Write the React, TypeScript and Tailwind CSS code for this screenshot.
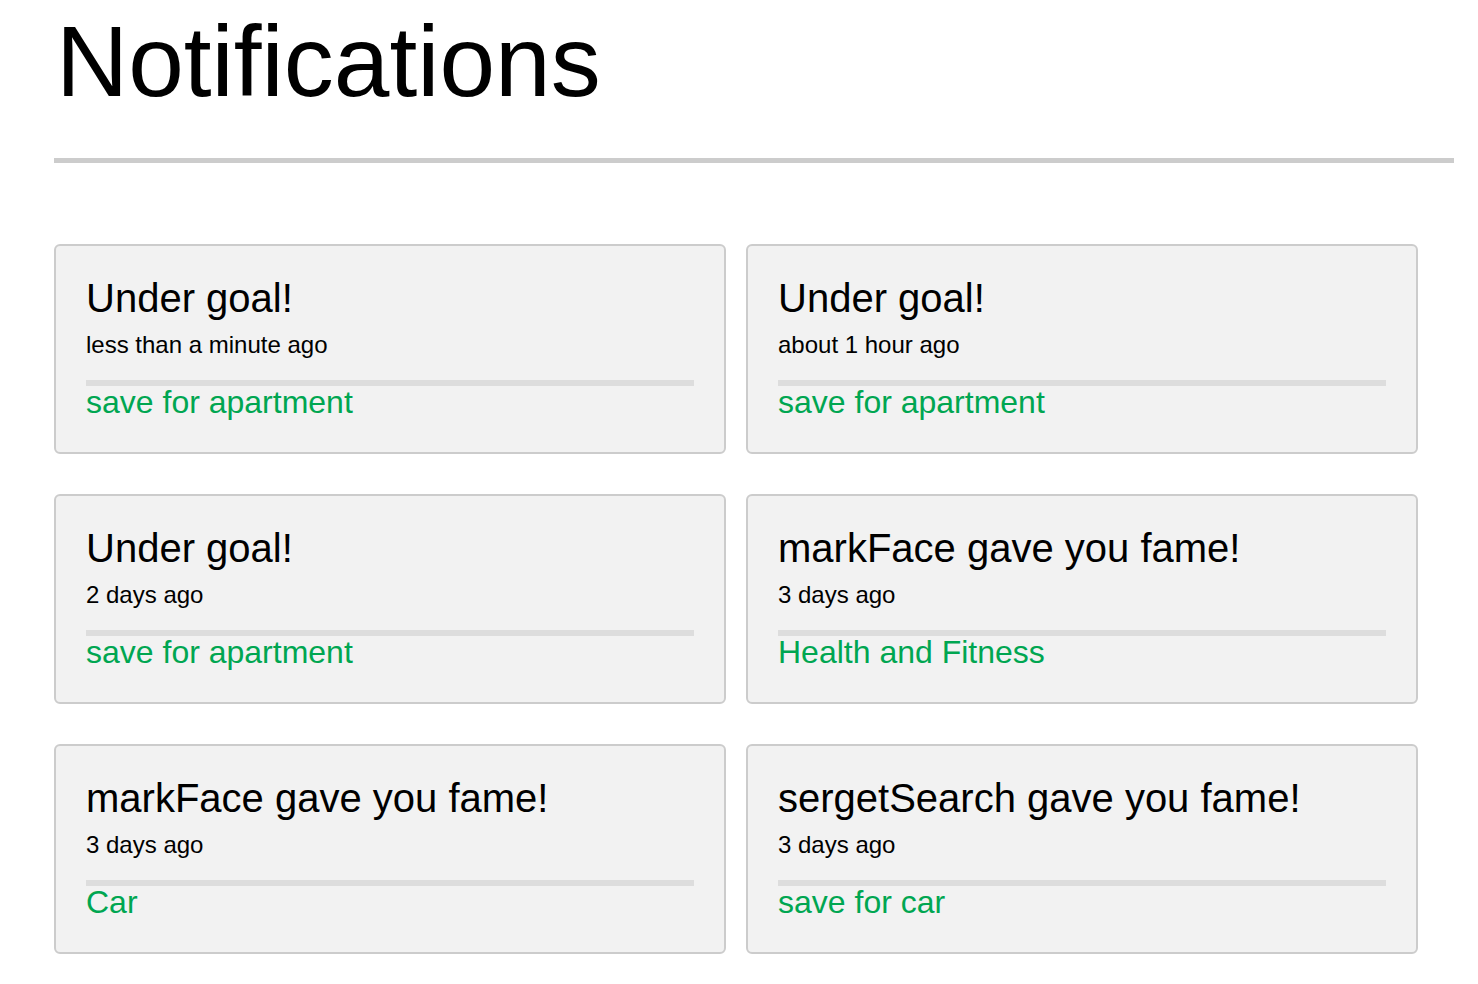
const NOTIFICATIONS = [
  { title: "Under goal!", when: "less than a minute ago", goal: "save for apartment" },
  { title: "Under goal!", when: "about 1 hour ago", goal: "save for apartment" },
  { title: "Under goal!", when: "2 days ago", goal: "save for apartment" },
  { title: "markFace gave you fame!", when: "3 days ago", goal: "Health and Fitness" },
  { title: "markFace gave you fame!", when: "3 days ago", goal: "Car" },
  { title: "sergetSearch gave you fame!", when: "3 days ago", goal: "save for car" },
];

type Note = (typeof NOTIFICATIONS)[number];

function NotificationCard({ n }: { n: Note }) {
  return (
    <div className="flex h-[210px] flex-col rounded-[6px] border-2 border-[#cccccc] bg-[#f2f2f2] px-[30px] pt-[32px]">
      <div className="text-[40px] leading-none text-black">{n.title}</div>
      <div className="mt-[15px] text-[24px] leading-none text-black">{n.when}</div>
      <div className="mt-[23px] h-[6px] bg-[#dddddd]" />
      <div className="text-[32px] leading-none text-[#00a651]">{n.goal}</div>
    </div>
  );
}

export default function App() {
  return (
    <div className="min-h-screen bg-white pl-[54px] font-['Liberation_Sans',Helvetica,Arial,sans-serif]">
      <h1 className="ml-[2px] pt-[11px] text-[100px] leading-none font-normal text-black">
        Notifications
      </h1>
      <div className="mt-[47px] h-[5px] w-[1400px] bg-[#cccccc]" />
      <div className="mt-[81px] grid w-[1364px] grid-cols-2 gap-x-[20px] gap-y-[40px]">
        {NOTIFICATIONS.map((n, i) => (
          <NotificationCard key={i} n={n} />
        ))}
      </div>
    </div>
  );
}
